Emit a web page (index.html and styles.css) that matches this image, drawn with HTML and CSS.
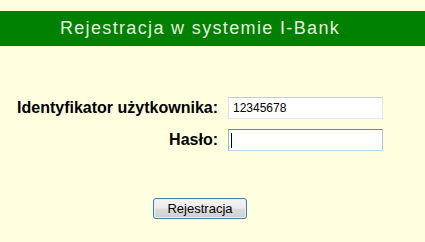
FILE: index.html
```html
<!DOCTYPE html>
<html lang="pl">
<head>
<meta charset="utf-8">
<title>Rejestracja w systemie I-Bank</title>
<link rel="stylesheet" href="styles.css">
</head>
<body>
<div class="page">
  <div class="header"><div class="header-inner">Rejestracja w systemie I-Bank</div></div>
  <form class="form">
    <div class="fields">
      <label class="label" for="uid">Identyfikator użytkownika:</label>
      <input class="field" id="uid" type="text" value="12345678">
      <label class="label" for="pwd">Hasło:</label>
      <span class="field-wrap"><input class="field field-focus" id="pwd" type="password"></span>
    </div>
    <div class="actions"><button class="btn" type="button">Rejestracja</button></div>
  </form>
</div>
</body>
</html>
```
FILE: styles.css
```css
html, body {
  margin: 0;
  padding: 0;
  background: #ffffe0;
}
.page {
  padding-top: 11px;
  font-family: "Liberation Sans", Arial, sans-serif;
  color: #000;
}
.header {
  background: #008000;
  height: 35px;
}
.header-inner {
  width: 400px;
  text-align: center;
  color: #e4f1dc;
  font-size: 18px;
  line-height: 35px;
  letter-spacing: 1.35px;
}
.form {
  margin: 0;
}
.fields {
  display: grid;
  grid-template-columns: 218px 155px;
  column-gap: 10px;
  row-gap: 10px;
  align-items: center;
  margin-top: 51px;
}
.label {
  text-align: right;
  font-weight: bold;
  font-size: 16px;
  line-height: 18px;
  white-space: nowrap;
}
.field {
  box-sizing: border-box;
  display: block;
  width: 155px;
  height: 22px;
  margin: 0;
  padding: 0 4px;
  background: #fff;
  border: 1px solid;
  border-color: #c9cbd0 #e2e3ea #e3e9ef #dbdfe6;
  font-family: "Liberation Sans", Arial, sans-serif;
  font-size: 12px;
  color: #000;
  outline: none;
}
.field-focus {
  border-color: #5a8fbd #a4c9e3 #b7d9ed #8fb6d6;
}
.field-wrap {
  position: relative;
  display: block;
  width: 155px;
  height: 22px;
}
.field-wrap::after {
  content: "";
  position: absolute;
  left: 3px;
  top: 4px;
  width: 1px;
  height: 15px;
  background: #000;
}
.actions {
  width: 400px;
  text-align: center;
  margin-top: 47px;
}
.btn {
  box-sizing: border-box;
  width: 94px;
  height: 21px;
  margin: 0;
  padding: 0;
  border: 1px solid #3c7fb1;
  border-radius: 3px;
  background: linear-gradient(#f4f4f4 0%, #ebebeb 48%, #dcdcdc 52%, #cfcfcf 100%);
  box-shadow: inset 0 0 0 1px #e4f3fb;
  font-family: "Liberation Sans", Arial, sans-serif;
  font-size: 13px;
  color: #000;
}
```
